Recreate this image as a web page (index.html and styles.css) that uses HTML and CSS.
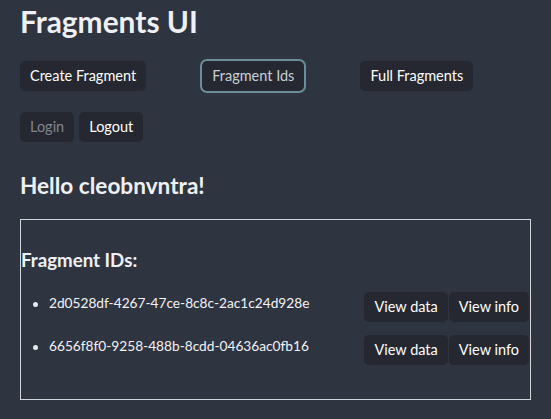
FILE: index.html
```html
<!DOCTYPE html>
<html lang="en">
<head>
<meta charset="utf-8">
<title>Fragments UI</title>
<link rel="stylesheet" href="styles.css">
</head>
<body>
<main class="app">
  <h1 class="title">Fragments UI</h1>
  <nav class="nav-row nav-main">
    <button class="btn">Create Fragment</button>
    <button class="btn btn-focus">Fragment Ids</button>
    <button class="btn">Full Fragments</button>
  </nav>
  <nav class="nav-row nav-auth">
    <button class="btn" disabled>Login</button>
    <button class="btn">Logout</button>
  </nav>
  <h2 class="greeting">Hello cleobnvntra!</h2>
  <section class="panel">
    <h3 class="panel-title">Fragment IDs:</h3>
    <ul class="id-list">
      <li class="id-item">
        <span class="id-text">2d0528df-4267-47ce-8c8c-2ac1c24d928e</span>
        <span class="actions"><button class="btn">View data</button><button class="btn">View info</button></span>
      </li>
      <li class="id-item">
        <span class="id-text">6656f8f0-9258-488b-8cdd-04636ac0fb16</span>
        <span class="actions"><button class="btn">View data</button><button class="btn">View info</button></span>
      </li>
    </ul>
  </section>
</main>
</body>
</html>
```
FILE: styles.css
```css
html, body {
  margin: 0;
  padding: 0;
  background: #2f3441;
}
body {
  font-family: Lato, "Open Sans", sans-serif;
  color: #ffffff;
}
.app {
  padding: 3px 20px 0 20px;
  display: flex;
  flex-direction: column;
}
.title {
  margin: 0;
  font-size: 29.9px;
  line-height: 36px;
  font-weight: 700;
  color: #eef0f4;
}
.nav-row {
  display: flex;
  align-items: center;
}
.nav-main {
  margin-top: 22px;
  gap: 56px;
}
.nav-auth {
  margin-top: 21px;
  gap: 5px;
}
.btn {
  font-family: Lato, "Open Sans", sans-serif;
  font-size: 14.5px;
  line-height: 20px;
  height: 30px;
  padding: 5px 10px;
  border: 0;
  border-radius: 5px;
  background: #252830;
  color: #ffffff;
  cursor: pointer;
}
.btn-focus {
  box-shadow: 0 0 0 2px #6b8e9b;
  color: #c9d0d8;
}
.btn:disabled {
  color: #80868f;
  cursor: default;
}
.greeting {
  margin: 30px 0 0 0;
  font-size: 22.6px;
  line-height: 27px;
  font-weight: 700;
  color: #eef0f4;
}
.panel {
  margin-top: 20px;
  border: 1px solid #d3d5da;
  padding: 29px 1px 34px 0;
}
.panel-title {
  margin: 0;
  font-size: 18.7px;
  line-height: 22px;
  font-weight: 700;
  color: #eef0f4;
}
.id-list {
  list-style: none;
  margin: 21px 0 0 0;
  padding: 0;
  display: flex;
  flex-direction: column;
  gap: 13px;
}
.id-item {
  display: flex;
  justify-content: space-between;
  align-items: flex-start;
}
.id-text {
  margin-left: 12px;
  font-size: 13.7px;
  line-height: 22px;
  color: #f2f3f5;
}
.id-text::before {
  content: "";
  display: inline-block;
  width: 5px;
  height: 5px;
  border-radius: 50%;
  background: #e8e9ec;
  vertical-align: middle;
  margin-right: 11px;
}
.actions {
  display: flex;
  gap: 1px;
}
```
